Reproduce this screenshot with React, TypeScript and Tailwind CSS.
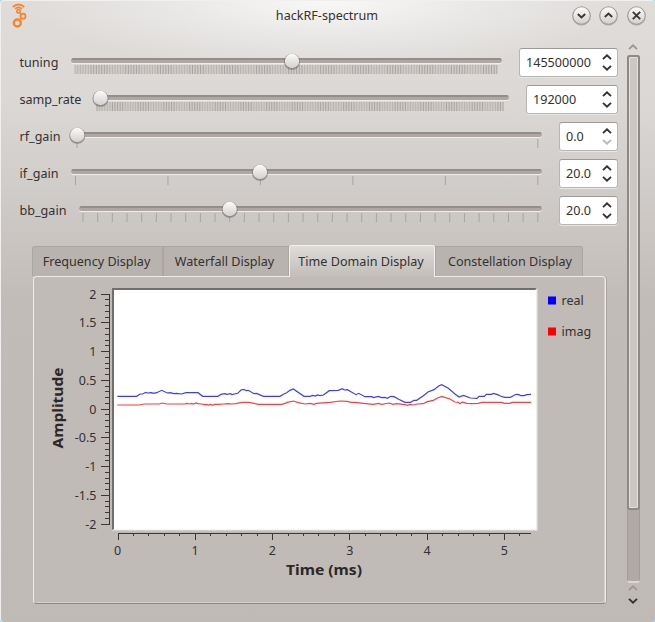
import React from 'react';

const FONT = 'Noto Sans';

type SliderProps = { width: number; thumb: number; ticks: { x: number; dark: boolean }[] };

const spread = (from: number, to: number, count: number) =>
  Array.from({ length: count }, (_, i) => ({ x: from + ((to - from) * i) / (count - 1), dark: true }));

const dense = (from: number, to: number, step: number, group: number, phase: number, gap: boolean) => {
  const out: { x: number; dark: boolean }[] = [];
  for (let x = from; x <= to; x += step) {
    const m = (((x - phase) % group) + group) % group;
    if (gap && m < 1.6) continue;
    out.push({ x, dark: m < group / 2 });
  }
  return out;
};

function Slider({ width, thumb, ticks }: SliderProps) {
  const packed = ticks.length > 100;
  const first = ticks[0].x;
  const last = ticks[ticks.length - 1].x;
  return (
    <svg width={width} height={37} className="block shrink-0 overflow-visible">
      <defs>
        <linearGradient id="knob" x1="0" y1="0" x2="0" y2="1">
          <stop offset="0" stopColor="#fbfbfa" />
          <stop offset="1" stopColor="#d3d0ce" />
        </linearGradient>
      </defs>
      <rect x={0} y={15} width={width} height={5} rx={2.5} fill="#efedec" />
      <rect x={0} y={14} width={width} height={5} rx={2.5} fill="#aea7a3" />
      <path d={`M2 15H${width - 2}`} stroke="#948d89" strokeWidth={2} strokeLinecap="round" />
      {packed && <rect x={first} y={21} width={last - first} height={9} fill="#c6c1be" opacity={0.6} />}
      {ticks.map((t, i) => (
        <rect key={i} x={t.x - 0.5} y={21} width={1} height={9} fill={t.dark ? '#a9a4a0' : '#b9b4b0'} />
      ))}
      <circle cx={thumb} cy={18} r={8} fill="#57504c" opacity={0.35} />
      <circle cx={thumb} cy={17.4} r={7.9} fill="#6f6864" opacity={0.35} />
      <circle cx={thumb} cy={17} r={7.2} fill="url(#knob)" />
    </svg>
  );
}

const Chevron = ({ up, color = '#343130' }: { up?: boolean; color?: string }) => (
  <svg width="10" height="6" viewBox="0 0 10 6" className="block">
    <path d={up ? 'M1 5.1 5 1.3 9 5.1' : 'M1 .9 5 4.7 9 .9'} fill="none" stroke={color} strokeWidth="1.9" />
  </svg>
);

function Row({ label, pad, value, slider, atMin }: {
  label: string; pad: string; value: string; slider: SliderProps; atMin?: boolean;
}) {
  return (
    <div className="flex h-[37px] items-center">
      <div className={`${pad} shrink-0 pt-px pl-[0.5px] whitespace-nowrap`}>{label}</div>
      <Slider {...slider} />
      <div className="mb-px ml-[17px] flex h-[29px] flex-1 items-center justify-between rounded-[3px] border border-[#b9b4b1] border-t-[#9f9995] bg-white pr-[5px] pl-[6px] shadow-[0_1px_0_#e9e7e6]">
        <span className="pt-px">{value}</span>
        <span className="flex flex-col gap-[5px]">
          <Chevron up />
          <Chevron color={atMin ? '#b9b6b4' : undefined} />
        </span>
      </div>
    </div>
  );
}

function WindowButton({ d }: { d: string }) {
  return (
    <svg width="21" height="21" viewBox="0 0 21 21" className="block">
      <circle cx="10.5" cy="11.2" r="9.3" fill="#8f8986" opacity="0.65" />
      <circle cx="10.5" cy="10.3" r="9" fill="#a19c99" />
      <circle cx="10.5" cy="10.5" r="8.2" fill="url(#knob)" />
      <path d={d} fill="none" stroke="#3a3634" strokeWidth="1.9" />
    </svg>
  );
}

type Segment = { ox: number; oy: number; pts: number[] };

const REAL: Segment[] = [
  { ox: 330, oy: 1110, pts: [22,79,80,79,90,72,98,72,107,67,112,69,125,68,130,70,140,68,155,61,172,69,180,68,192,71,200,70,215,72,228,68,264,68,278,79,324,79,333,73,345,71,350,73,362,71,366,74,383,70,393,60,402,58,408,62,415,61,432,71,440,70,460,79,510,79,520,73,530,68,540,61] },
  { ox: 690, oy: 705, pts: [190,462,222,484,240,484,248,481,256,483,262,480,270,482,280,480,298,467,325,466,337,461,343,465,352,464,378,479,386,475,405,485,426,485,430,488,445,484,455,488,465,487,472,490,482,484,492,485,506,493,525,502,542,502,552,496,560,496,580,482,594,471,612,464] },
  { ox: 1305, oy: 705, pts: [12,452,20,449,40,460,60,477,72,486,86,481,106,489,126,490,132,484,148,484,154,478,170,478,175,475,188,479,196,483,208,487,226,487,235,482,243,478,252,479,257,482,268,482,275,479,288,478] },
];

const IMAG: Segment[] = [
  { ox: 330, oy: 1110, pts: [22,105,88,105,103,102,148,102,156,99,170,102,225,102,230,100,240,102,245,100,250,102,258,99,264,101,275,102,282,104,290,103,296,105,302,103,308,106,314,103,325,103,340,102,355,101,365,102,378,101,395,97,418,97,435,101,445,103,515,103,525,100] },
  { ox: 690, oy: 705, pts: [172,502,190,498,205,503,225,507,240,505,252,508,260,505,300,502,330,498,352,499,362,502,375,502,400,505,430,508,445,505,455,508,478,504,488,508,500,506,525,509,533,511,540,508,550,510,562,507,580,506,592,500,610,496] },
  { ox: 1305, oy: 705, pts: [8,489,20,484,32,488,45,492,60,501,70,502,75,506,82,501,95,505,110,506,130,505,140,502,200,502,208,505,224,505,232,502,288,502] },
];

const trace = (segments: Segment[]) =>
  segments
    .flatMap((s) => s.pts.map((v, i) => ((v + (i % 2 ? s.oy : s.ox)) / 3).toFixed(2)))
    .reduce((acc, v, i) => acc + (i % 2 ? ',' : ' ') + v, '');

function Chart() {
  const yTicks = Array.from({ length: 41 }, (_, i) => i);
  const xTicks = Array.from({ length: 27 }, (_, i) => i);
  return (
    <svg width={570} height={324} viewBox="34 277 570 324" className="block" fontFamily={FONT} fontSize="12.5" fill="#343130">
      <rect x={112} y={288} width={425.7} height={242.7} fill="#dedbd9" />
      <path d="M112 530V288H537L535 290H114V529Z" fill="#746e6b" />
      <rect x={114} y={290} width={422.5} height={239.7} fill="#fff" />
      <g shapeRendering="crispEdges" stroke="#3b3735" strokeWidth={1}>
        <path d="M109.5 294V525M118 533.5H531" />
        {yTicks.map((i) => {
          const y = Math.round(293.5 + i * 5.75) + 0.5;
          return <path key={i} d={`M${i % 5 === 0 ? 101 : 105} ${y}H109`} />;
        })}
        {xTicks.map((i) => {
          const x = Math.floor(118 + i * 15.46) + 0.5;
          return <path key={i} d={`M${x} 533V${i % 5 === 0 ? 540 : 536}`} />;
        })}
      </g>
      {['2', '1.5', '1', '0.5', '0', '-0.5', '-1', '-1.5', '-2'].map((t, i) => (
        <text key={t} x={96.5} y={298.5 + i * 28.75} textAnchor="end">{t}</text>
      ))}
      {[0, 1, 2, 3, 4, 5].map((n) => (
        <text key={n} x={117.7 + n * 77.35} y={555} textAnchor="middle">{n}</text>
      ))}
      <g fontWeight={700} fontSize="15" fill="#2b2827" textAnchor="middle">
        <text x={324} y={575} textLength={76} lengthAdjust="spacingAndGlyphs">Time (ms)</text>
        <text transform="translate(63 408) rotate(-90)" textLength={81} lengthAdjust="spacingAndGlyphs">Amplitude</text>
      </g>
      <polyline points={trace(IMAG)} fill="none" stroke="#ff3c3c" strokeWidth={1.2} />
      <polyline points={trace(REAL)} fill="none" stroke="#3c3cff" strokeWidth={1.2} />
      <rect x={548} y={296.5} width={8} height={8} fill="#00f" />
      <rect x={548} y={327.5} width={8} height={8} fill="#f00" />
      <text x={561.5} y={305}>real</text>
      <text x={561.5} y={336}>imag</text>
    </svg>
  );
}

function ScrollBar() {
  return (
    <div className="flex w-[13px] flex-col items-center">
      <Chevron up color="#9d9895" />
      <div className="mt-[5px] h-[527px] w-[13px] rounded-[3px] border border-[#a29c99] border-b-[#dcd9d7] bg-[#b1a9a6] shadow-[0_1px_0_#d9d6d4]">
        <div className="-mt-px -ml-px h-[455px] w-[13px] rounded-[3px] border-2 border-[#8f8985] bg-[#d2cecb]/80 shadow-[inset_0_0_0_1px_#e2dfdd]" />
      </div>
      <div className="mt-[3px] flex flex-col gap-[7px]">
        <Chevron up color="#9d9895" />
        <Chevron />
      </div>
    </div>
  );
}

export default function App() {
  return (
    <div className="h-[622px] w-[655px] overflow-hidden bg-[#a9d9ef]">
      <div className="flex h-[622px] w-[655px] flex-col overflow-hidden rounded-[4px] border-t border-l border-[#f1f0ef] bg-[radial-gradient(ellipse_300px_70px_at_327px_0px,#f8f8f7_0%,#f1f0efb0_45%,transparent_100%),linear-gradient(180deg,#dfdcda_0px,#dbd8d5_95px,#d1cdca_180px,#c1bcb8_300px,#bfbab6_622px)] font-['Noto_Sans',sans-serif] text-[12.6px] leading-4 text-[#343130]">
        <header className="flex h-[43px] shrink-0 items-start">
          <svg width="40" height="30" viewBox="1 1 40 30" className="block" fill="none" stroke="#f9822f">
            <path d="M12.8 7Q18.5 2 24.2 7M15 8.8Q18.5 5.8 22 8.8" strokeWidth="1.7" />
            <circle cx="18.5" cy="11.3" r="1.8" strokeWidth="1.4" />
            <circle cx="23" cy="16.2" r="2.5" strokeWidth="1.8" />
            <circle cx="17.3" cy="23" r="3.5" strokeWidth="2.3" />
            <path d="m19.5 13 1.5 1.5M21 18.2l-1.5 2" strokeWidth="1.3" />
          </svg>
          <h1 className="w-[532px] pt-[7px] pl-[40px] text-center font-normal">hackRF-spectrum</h1>
          <div className="-ml-[2.5px] flex gap-[6.5px] pt-[4px]">
            <WindowButton d="M6.8 9l3.7 3.5L14.2 9" />
            <WindowButton d="M6.8 12l3.7-3.5 3.7 3.5" />
            <WindowButton d="M6.8 6.8l7.4 7.4M14.2 6.8l-7.4 7.4" />
          </div>
        </header>
        <div className="flex">
          <main className="w-[625.5px] shrink-0">
            <section className="w-[617px] pl-[18px]">
              <Row label="tuning" pad="w-[52px]" value="145500000"
                slider={{ width: 431, thumb: 221, ticks: dense(4, 428, 2.67, 32.7, 20, false) }} />
              <Row label="samp_rate" pad="w-[74px]" value="192000"
                slider={{ width: 416, thumb: 7.5, ticks: dense(4, 411, 2.57, 25.7, 17.5, true) }} />
              <Row label="rf_gain" pad="w-[52px]" value="0.0" atMin
                slider={{ width: 471, thumb: 6.3, ticks: spread(6, 466.8, 2) }} />
              <Row label="if_gain" pad="w-[52px]" value="20.0"
                slider={{ width: 471, thumb: 189, ticks: spread(4.5, 466.8, 6) }} />
              <Row label="bb_gain" pad="w-[60px]" value="20.0"
                slider={{ width: 463, thumb: 150.7, ticks: spread(4, 458.8, 32) }} />
            </section>
            <section className="pt-4 pl-[31px]">
              <nav className="flex h-[31px] items-end">
                {[
                  ['Frequency Display', 'w-[131px] rounded-tl-[3px] pr-[2px]'],
                  ['Waterfall Display', 'w-[126px] pr-[3px]'],
                  ['Time Domain Display', ''],
                  ['Constellation Display', 'w-[148px] rounded-tr-[3px] pl-[2px]'],
                ].map(([t, cls]) =>
                  cls ? (
                    <div key={t} className={`${cls} h-[30px] border border-b-0 border-[#aca6a2] bg-[#b9b3af] pt-[7px] text-center whitespace-nowrap`}>{t}</div>
                  ) : (
                    <div key={t} className="relative z-10 -mb-px h-[32px] w-[146px] rounded-t-[3px] border border-b-0 border-[#f3f1f0] bg-linear-to-b from-[#dedbd9] to-[#c2bdb9] pt-[8px] pr-[2px] text-center whitespace-nowrap">{t}</div>
                  ),
                )}
              </nav>
              <div className="ml-px h-[328px] w-[573px] rounded-[4px] border border-[#eeecea] border-b-[#8e8884] bg-[#c0bbb7] shadow-[inset_-1px_-1px_0_#d3d0cd,1px_0_0_#aaa4a0]">
                <Chart />
              </div>
            </section>
          </main>
          <ScrollBar />
        </div>
      </div>
    </div>
  );
}
